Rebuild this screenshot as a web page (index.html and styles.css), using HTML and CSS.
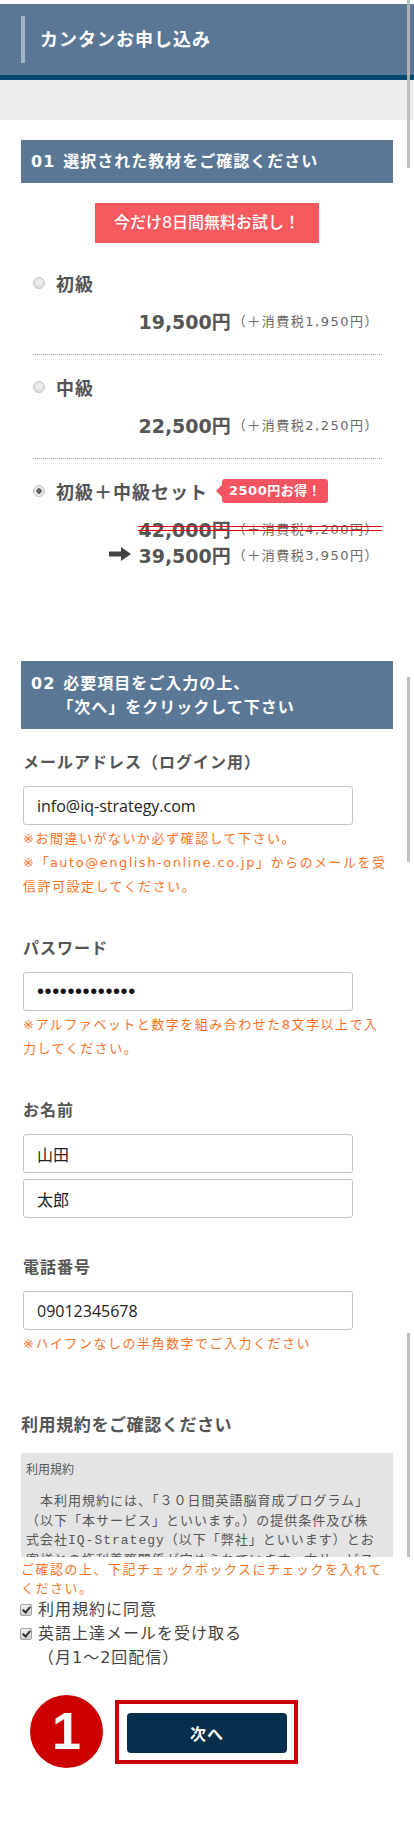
FILE: index.html
```html
<!DOCTYPE html>
<html lang="ja">
<head>
  <meta charset="UTF-8" />
  <title>カンタンお申し込み</title>
  <link rel="stylesheet" href="styles.css">
</head>
<body>
  <div class="page">
    <header class="topbar">
      <h1>カンタンお申し込み</h1>
    </header>
    <div class="band"></div>

    <section class="step">
      <h2 class="step-title"><span class="num">01</span><span>選択された教材をご確認ください</span></h2>
      <p class="trial">今だけ8日間無料お試し！</p>

      <ul class="plans">
        <li class="plan">
          <div class="plan-name"><span class="radio"></span>初級</div>
          <div class="price"><span class="amount"><b>19,500円</b><small>（＋消費税1,950円）</small></span></div>
        </li>
        <li class="plan">
          <div class="plan-name"><span class="radio"></span>中級</div>
          <div class="price"><span class="amount"><b>22,500円</b><small>（＋消費税2,250円）</small></span></div>
        </li>
        <li class="plan">
          <div class="plan-name"><span class="radio checked"></span>初級＋中級セット<span class="deal">2500円お得！</span></div>
          <div class="price old"><span class="amount"><b>42,000円</b><small>（＋消費税4,200円）</small></span></div>
          <div class="price new">
            <span class="amount">
              <svg class="arrow" width="22" height="14" viewBox="0 0 22 14"><path d="M0 4.5h12V0l10 7-10 7V9.5H0z" fill="#444"/></svg>
              <b>39,500円</b><small>（＋消費税3,950円）</small>
            </span>
          </div>
        </li>
      </ul>
    </section>

    <section class="step step-form">
      <h2 class="step-title two-line">
        <span class="num">02</span>
        <span class="lines"><span>必要項目をご入力の上、</span><span class="second">「次へ」をクリックして下さい</span></span>
      </h2>

      <form class="fields">
        <div class="field">
          <label for="email">メールアドレス（ログイン用）</label>
          <input type="text" id="email" value="info@iq-strategy.com">
          <p class="note">※お間違いがないか必ず確認して下さい。<br>※「auto@english-online.co.jp」からのメールを受信許可設定してください。</p>
        </div>

        <div class="field">
          <label for="password">パスワード</label>
          <input type="password" id="password" value="abcdefgh12345">
          <p class="note">※アルファベットと数字を組み合わせた8文字以上で入力してください。</p>
        </div>

        <div class="field">
          <label for="sei">お名前</label>
          <input type="text" id="sei" value="山田">
          <input type="text" id="mei" value="太郎">
        </div>

        <div class="field">
          <label for="tel">電話番号</label>
          <input type="text" id="tel" value="09012345678">
          <p class="note">※ハイフンなしの半角数字でご入力ください</p>
        </div>
      </form>

      <div class="terms">
        <h3>利用規約をご確認ください</h3>
        <div class="terms-box">
          <div class="terms-head">利用規約</div>
          <p>　本利用規約には、「３０日間英語脳育成プログラム」<br>（以下「本サービス」といいます。）の提供条件及び株<br>式会社IQ-Strategy（以下「弊社」といいます）とお<br>客様との権利義務関係が定められています。本サービス<br>のご利用に際しては、本規約の全文をお読みください。</p>
        </div>
        <p class="agree-note">ご確認の上、下記チェックボックスにチェックを入れてください。</p>

        <ul class="checks">
          <li><span class="check"></span><span>利用規約に同意</span></li>
          <li><span class="check"></span><span>英語上達メールを受け取る<br>（月1〜2回配信）</span></li>
        </ul>

        <div class="submit-row">
          <div class="step-no">1</div>
          <div class="btn-frame">
            <button type="button">次へ</button>
          </div>
        </div>
      </div>
    </section>

    <!-- screenshot scrollbars -->
    <span class="scrollbar s1"></span>
    <span class="scrollbar s2"></span>
    <span class="scrollbar s3"></span>
  </div>
</body>
</html>
```

FILE: styles.css
```css
body {
  margin: 0;
  background: #fff;
  font-family: "DejaVu Sans", "Noto Sans CJK JP", sans-serif;
  color: #555;
}

.page {
  position: relative;
  width: 414px;
  min-height: 1840px;
  padding-top: 4px;
  box-sizing: border-box;
}

.topbar {
  height: 59px;
  background: #5a7896;
  border-bottom: 5px solid #034a6e;
  padding: 12px 0 0 21px;
}

.topbar h1 {
  margin: 0;
  height: 47px;
  line-height: 47px;
  border-left: 4px solid #a4b3c3;
  padding-left: 15px;
  font-size: 18px;
  font-weight: bold;
  letter-spacing: 1px;
  color: #fff;
}

.band {
  height: 40px;
  background: #ededed;
}

.step-title {
  display: flex;
  gap: 8px;
  margin: 20px 21px 0;
  height: 43px;
  line-height: 43px;
  padding-left: 10px;
  background: #5a7896;
  color: #fff;
  font-size: 16px;
  font-weight: bold;
  letter-spacing: 1px;
}

.step-title.two-line {
  height: auto;
  line-height: 24px;
  padding: 11px 10px 9px;
}

.step-title .lines {
  display: flex;
  flex-direction: column;
}

.step-title .second {
  margin-left: -6px;
}

.trial {
  width: 224px;
  height: 40px;
  margin: 20px auto 0;
  background: #f65a5f;
  color: #fff;
  font-size: 16px;
  font-weight: 500;
  line-height: 40px;
  text-align: center;
}

.plans {
  list-style: none;
  margin: 8px 32px 0 33px;
  padding: 0;
}

.plan {
  padding: 20px 0 22px;
  border-bottom: 1px dotted #aaa;
}

.plan:last-child {
  border-bottom: none;
}

.plan-name {
  display: flex;
  align-items: center;
  height: 24px;
  font-size: 18px;
  font-weight: bold;
  letter-spacing: 1px;
  color: #555;
}

.radio {
  width: 12px;
  height: 12px;
  margin-right: 11px;
  border: 1px solid #c4c4c4;
  border-radius: 50%;
  box-sizing: border-box;
  background: radial-gradient(circle at 50% 35%, #f4f4f4, #d2d2d2);
}

.radio.checked {
  background: radial-gradient(circle, #666 0 2.5px, #f0f0f0 3px, #d4d4d4 100%);
}

.deal {
  position: relative;
  margin-left: 14px;
  height: 24px;
  line-height: 24px;
  padding: 0 7px;
  border-radius: 3px;
  background: #f4545f;
  color: #fff;
  font-size: 13px;
  letter-spacing: 0.5px;
}

.deal::before {
  content: "";
  position: absolute;
  left: -6px;
  top: 6px;
  border-style: solid;
  border-width: 6px 6px 6px 0;
  border-color: transparent #f4545f transparent transparent;
}

.price {
  display: flex;
  justify-content: flex-end;
  margin-top: 13px;
  height: 24px;
}

.price.new {
  margin-top: 2px;
}

.amount {
  position: relative;
  display: flex;
  align-items: center;
  padding-right: 3px;
}

.amount b {
  font-size: 19px;
  font-weight: bold;
  color: #555;
}

.amount small {
  margin-left: 2px;
  font-size: 13px;
  letter-spacing: 1.5px;
  color: #666;
}

.arrow {
  margin-right: 7px;
}

.price.old .amount::after {
  content: "";
  position: absolute;
  left: 0;
  right: 0;
  top: 10px;
  height: 3px;
  border-top: 1.5px solid #e8000b;
  border-bottom: 1.5px solid #e8000b;
}

.step-form {
  margin-top: 73px;
}

.fields {
  margin: 0;
  padding-left: 23px;
}

.field {
  margin-top: 38px;
}

.field:first-child {
  margin-top: 22px;
}

.field label {
  display: block;
  line-height: 24px;
  font-size: 16px;
  font-weight: bold;
  letter-spacing: 1px;
  color: #555;
}

.field input {
  display: block;
  width: 330px;
  height: 39px;
  margin-top: 11px;
  padding: 0 13px;
  box-sizing: border-box;
  border: 1px solid #bcc7cf;
  border-radius: 3px;
  font-family: "Open Sans", "Noto Sans CJK JP", sans-serif;
  font-size: 16px;
  color: #222;
}

.field input + input {
  margin-top: 6px;
}

.field input[type="password"] {
  font-family: "Liberation Sans", sans-serif;
  font-size: 20px;
  letter-spacing: 0.6px;
  color: #111;
}

.note {
  width: 366px;
  margin: 2px 0 0;
  font-size: 13px;
  line-height: 24px;
  letter-spacing: 1.5px;
  color: #f7721f;
}

.terms {
  margin: 57px 21px 0;
}

.terms h3 {
  margin: 0;
  line-height: 24px;
  font-size: 17px;
  font-weight: bold;
  letter-spacing: 0.6px;
  color: #555;
}

.terms-box {
  height: 104px;
  margin-top: 16px;
  padding: 7px 5px 0;
  box-sizing: border-box;
  overflow: hidden;
  background: #e4e4e4;
  color: #555;
}

.terms-head {
  font-size: 12px;
  line-height: 20px;
}

.terms-box p {
  margin: 12px 0 0;
  font-family: "Liberation Mono", "Noto Sans CJK JP", monospace;
  font-size: 13px;
  line-height: 19.5px;
  letter-spacing: 1px;
  white-space: nowrap;
}

.agree-note {
  width: 368px;
  margin: 4px 0 0;
  font-size: 13px;
  line-height: 18.5px;
  letter-spacing: 1.5px;
  color: #f7721f;
}

.checks {
  list-style: none;
  margin: 0 0 0 -1px;
  padding: 0;
  font-size: 16px;
  line-height: 24px;
  letter-spacing: 1px;
  color: #444;
}

.checks li {
  display: flex;
  align-items: flex-start;
}

.check {
  position: relative;
  flex: none;
  width: 12px;
  height: 12px;
  margin: 6px 6px 0 0;
  border: 1px solid #a0a0a0;
  border-radius: 2px;
  box-sizing: border-box;
  background: linear-gradient(#f2f2f2, #cfcfcf);
}

.check::after {
  content: "";
  position: absolute;
  left: 3px;
  top: 0;
  width: 3px;
  height: 6px;
  border: solid #333;
  border-width: 0 2px 2px 0;
  transform: rotate(40deg);
}

.submit-row {
  display: flex;
  align-items: center;
  gap: 12px;
  margin-top: 25px;
  padding-left: 9px;
}

.step-no {
  width: 73px;
  height: 73px;
  border-radius: 50%;
  background: #cc0000;
  color: #fff;
  font-family: "Liberation Sans", sans-serif;
  font-size: 52px;
  font-weight: bold;
  line-height: 73px;
  text-align: center;
}

.btn-frame {
  border: 4px solid #c8000a;
  padding: 9px 7px 7px 8px;
}

.btn-frame button {
  display: block;
  width: 160px;
  height: 40px;
  border: none;
  border-radius: 4px;
  background: #062f4d;
  color: #fff;
  font-family: "Noto Sans CJK JP", sans-serif;
  font-size: 16px;
  font-weight: bold;
  letter-spacing: 1px;
  cursor: pointer;
}

.scrollbar {
  position: absolute;
  left: 407px;
  width: 3px;
  background: rgba(184, 184, 184, 0.9);
}

.s1 { top: 0; height: 168px; }
.s2 { top: 677px; height: 185px; }
.s3 { top: 1333px; height: 224px; }
```
